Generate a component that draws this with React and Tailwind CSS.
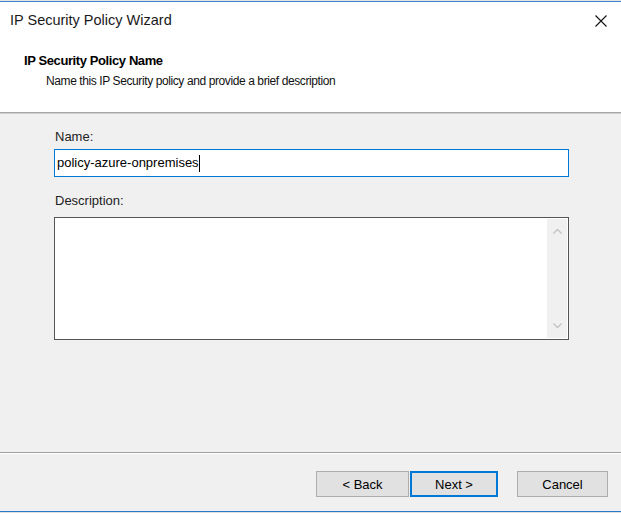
import React from "react";

const font = { fontFamily: '"Liberation Sans", Arial, sans-serif' };

function Chevron({ up }) {
  return (
    <svg width="9" height="6" viewBox="0 0 9 6" className="block">
      <path
        d={up ? "M0.5 5.5 L4.5 1.5 L8.5 5.5" : "M0.5 0.5 L4.5 4.5 L8.5 0.5"}
        fill="none"
        stroke="#c2c2c2"
        strokeWidth="1.3"
      />
    </svg>
  );
}

export default function App() {
  return (
    <div
      className="w-[621px] h-[513px] flex flex-col bg-white text-black overflow-hidden"
      style={font}
    >
      <div className="h-px bg-[#e6e6e6]" />
      <div className="h-px bg-[#3b82cf]" />

      {/* title bar + header */}
      <div className="h-[110px] bg-white flex flex-col">
        <div className="h-[37px] flex items-center justify-between pl-[10px] pr-[14px]">
          <span className="text-[14.5px] text-[#1a1a1a]">IP Security Policy Wizard</span>
          <svg width="12" height="12" viewBox="0 0 12 12">
            <path d="M0.5 0.5 L11.5 11.5 M11.5 0.5 L0.5 11.5" stroke="#111" strokeWidth="1.1" />
          </svg>
        </div>
        <div className="pl-[24px] pt-[14px]">
          <div className="text-[13px] font-bold tracking-[-0.4px] leading-[16px]">IP Security Policy Name</div>
          <div className="pl-[22px] text-[12px] tracking-[-0.4px] leading-[16px] mt-[4px] text-[#111]">
            Name this IP Security policy and provide a brief description
          </div>
        </div>
      </div>
      <div className="h-px bg-[#a8a8a8]" />
      <div className="h-px bg-[#d0d0d0]" />

      {/* body */}
      <div className="h-[338px] bg-[#f0f0f0] pl-[54px] pr-[52px] pt-[15px] flex flex-col">
        <div className="text-[13px] leading-[16px] pl-px text-[#222]">Name:</div>
        <div className="mt-[4px] h-[28px] border border-[#0078d7] bg-white flex items-center pl-[2px]">
          <span className="text-[13px]">policy-azure-onpremises</span>
          <span className="w-px h-[17px] bg-black" />
        </div>
        <div className="mt-[16px] text-[13px] leading-[16px] pl-px text-[#222]">Description:</div>
        <div className="mt-[8px] h-[123px] border border-[#555] bg-white flex justify-end p-px">
          <div className="w-[20px] bg-[#f0f0f0] flex flex-col items-center justify-between py-[9px]">
            <Chevron up />
            <Chevron />
          </div>
        </div>
      </div>
      <div className="h-px bg-[#a0a0a0]" />
      <div className="h-px bg-white" />

      {/* footer */}
      <div className="flex-1 bg-[#f0f0f0] flex items-start justify-end pt-[17px] pr-[13px]">
        <button className="w-[93px] h-[26px] bg-[#e1e1e1] border border-[#adadad] text-[13px] leading-[16px] pt-[1px]">
          &lt; Back
        </button>
        <button className="ml-[1px] w-[88px] h-[26px] bg-[#e1e1e1] border-2 border-[#0078d7] text-[13px] leading-[16px] pt-[1px]">
          Next &gt;
        </button>
        <button className="ml-[19px] w-[91px] h-[26px] bg-[#e1e1e1] border border-[#adadad] text-[13px] leading-[16px] pt-[1px]">
          Cancel
        </button>
      </div>
      <div className="h-px bg-[#2a78c8]" />
      <div className="h-px bg-[#e0e0e0]" />
    </div>
  );
}
